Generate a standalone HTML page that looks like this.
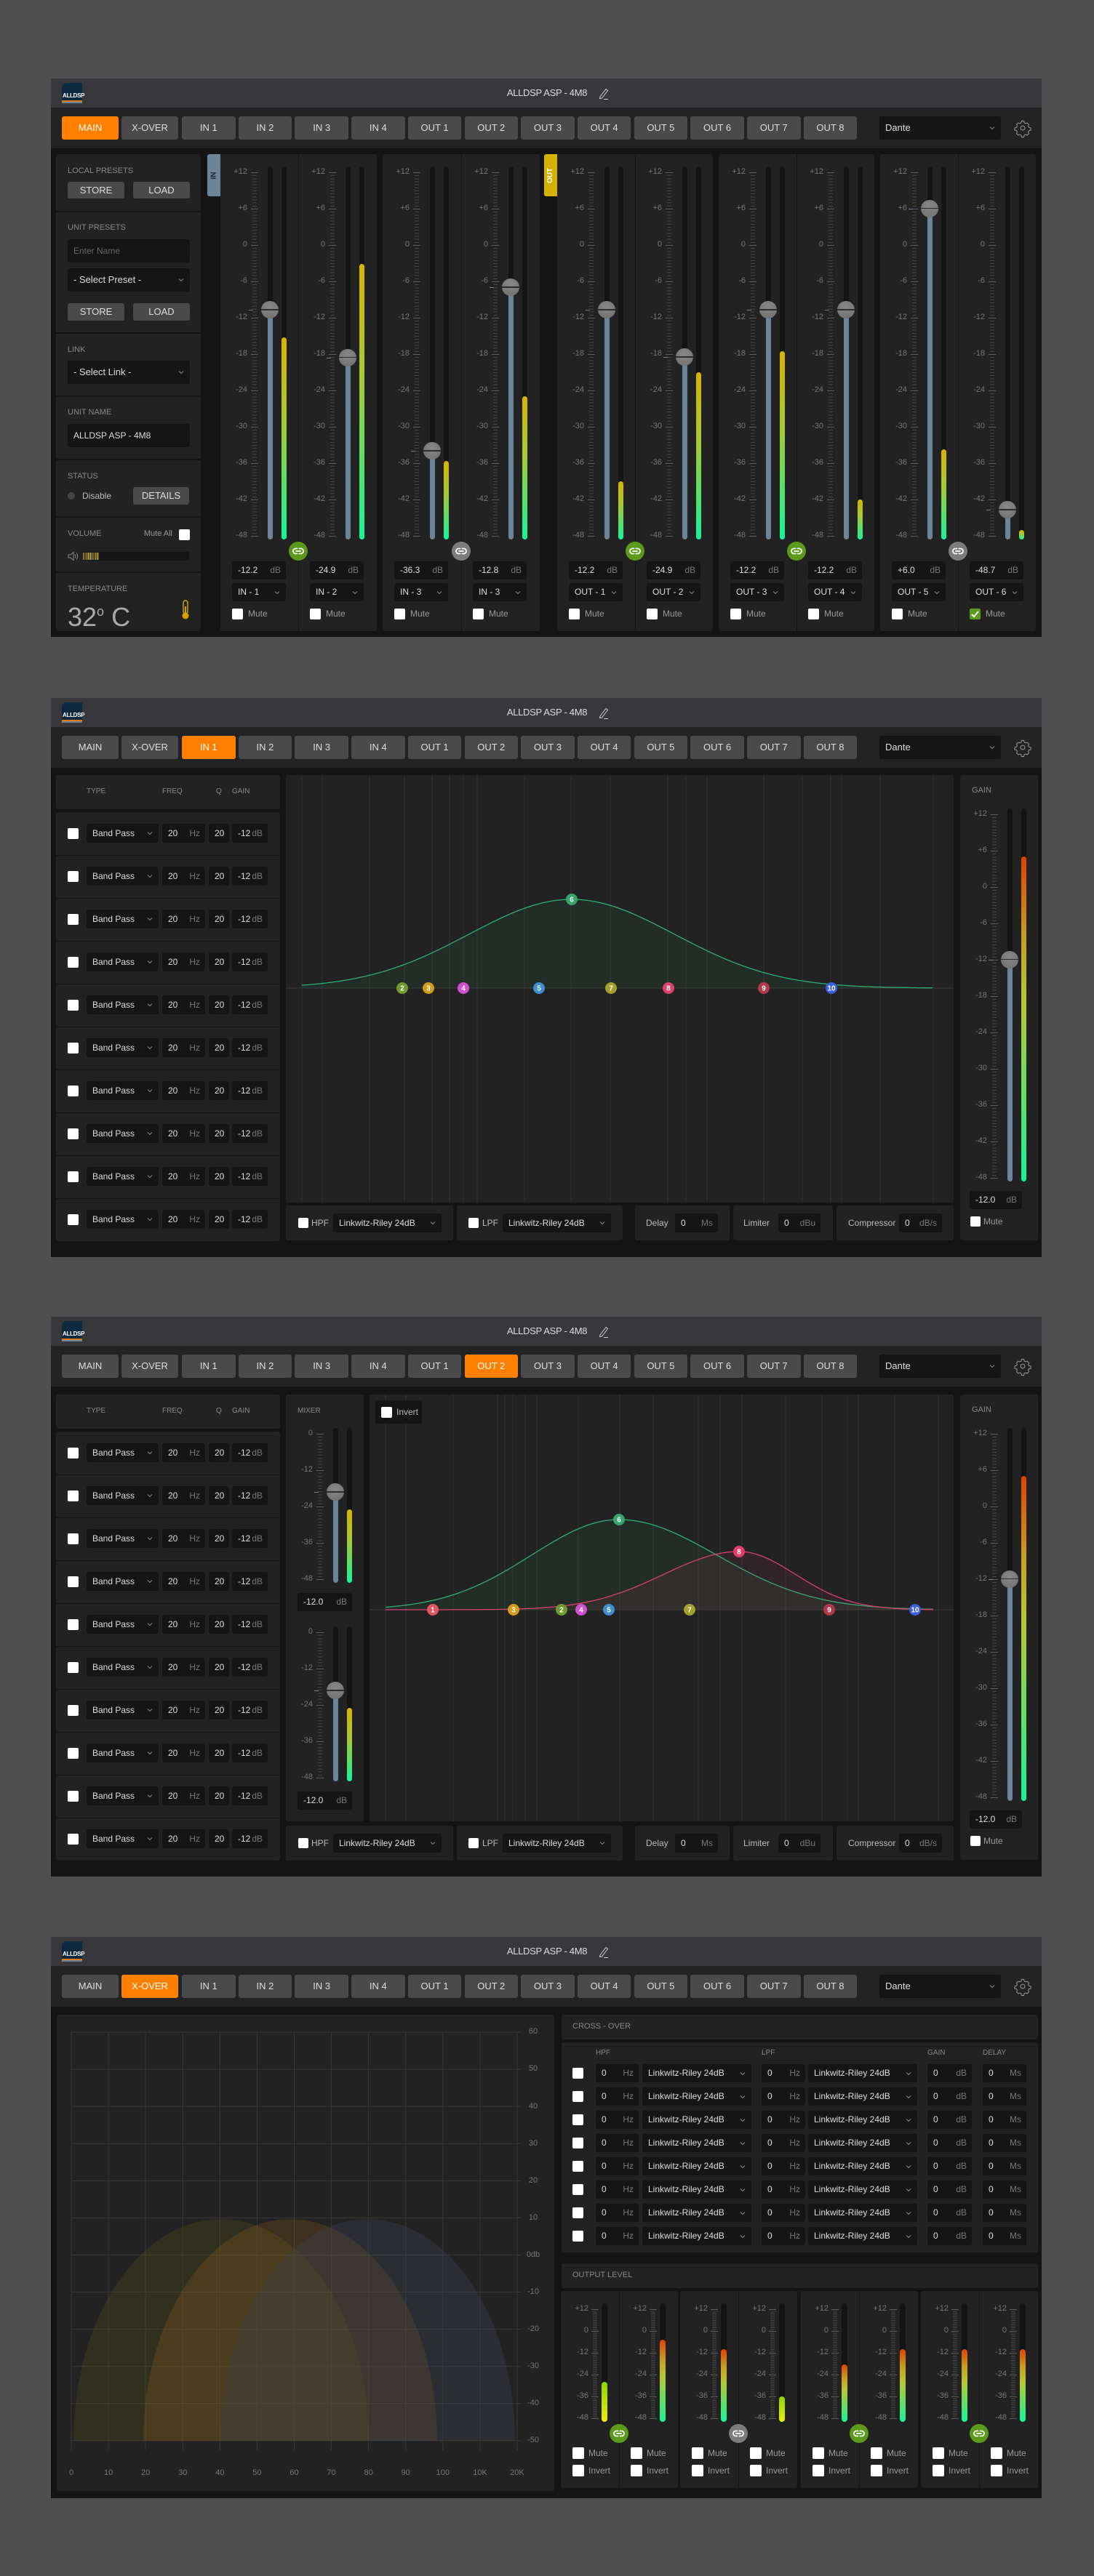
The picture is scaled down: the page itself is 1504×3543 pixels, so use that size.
<!DOCTYPE html>
<html><head><meta charset="utf-8"><title>ALLDSP ASP - 4M8</title>
<style>
html,body{margin:0;padding:0;}
body{width:1504px;height:3543px;background:#4f4f4f;position:relative;overflow:hidden;font-family:"Liberation Sans Narrow","Liberation Sans",sans-serif;}
#root{position:absolute;left:0;top:0;width:1504px;height:3543px;}
#root div{box-sizing:border-box;}
svg{overflow:visible}
</style></head>
<body><div id="root"></div>
<script>
let H='';
const A=(x,y,w,h,s,c='')=>{H+=`<div style="position:absolute;left:${x}px;top:${y}px;width:${w}px;height:${h}px;${s}">${c}</div>`;};
const T=(x,cy,t,fs=12,col='#ccc',ex='')=>{H+=`<div style="position:absolute;left:${x}px;top:${cy-fs*0.6}px;line-height:${fs*1.2}px;font-size:${fs}px;color:${col};white-space:nowrap;${ex}">${t}</div>`;};
const TR=(xr,cy,t,fs=12,col='#ccc')=>{H+=`<div style="position:absolute;left:${xr-120}px;width:120px;text-align:right;top:${cy-fs*0.6}px;line-height:${fs*1.2}px;font-size:${fs}px;color:${col};white-space:nowrap">${t}</div>`;};
const TC=(xc,cy,t,fs=12,col='#ccc',ex='')=>{H+=`<div style="position:absolute;left:${xc-100}px;width:200px;text-align:center;top:${cy-fs*0.6}px;line-height:${fs*1.2}px;font-size:${fs}px;color:${col};white-space:nowrap;${ex}">${t}</div>`;};
const chev=(x,cy)=>{H+=`<svg style="position:absolute;left:${x}px;top:${cy-2}px" width="8" height="5"><polyline points="1,0.5 4,3.5 7,0.5" fill="none" stroke="#888" stroke-width="1"/></svg>`;};
const inp=(x,y,w,h,v,u,vc='#ddd')=>{A(x,y,w,h,'background:#151515;border-radius:3px');T(x+8,y+h/2,v,12,vc);if(u)TR(x+w-7,y+h/2,u,12,'#777');};
const sel=(x,y,w,h,v,fs=12)=>{A(x,y,w,h,'background:#151515;border-radius:3px');T(x+8,y+h/2,v,fs,'#ddd');chev(x+w-16,y+h/2);};
const cb=(x,cy,s=15,ch=false)=>{A(x,cy-s/2,s,s,`background:${ch?'#5c9a1a':'#fff'};border-radius:2px`,ch?`<svg width="${s}" height="${s}"><polyline points="3,8 6,11 12,4" fill="none" stroke="#fff" stroke-width="2"/></svg>`:'');};
const btn=(x,y,w,h,t,bg='#4a4a4a',col='#ddd',fs=13)=>{A(x,y,w,h,`background:${bg};border-radius:3px;color:${col};font-size:${fs}px;text-align:center;line-height:${h}px`,t);};
const linkSvg='<svg width="26" height="26"><path d="M11.5 9.5H9.5a3.5 3.5 0 0 0 0 7h2M14.5 9.5h2a3.5 3.5 0 0 1 0 7h-2M10 13h6" fill="none" stroke="#fff" stroke-width="1.8" stroke-linecap="round"/></svg>';
const link=(cx,cy,g)=>{A(cx-13,cy-13,26,26,`background:${g?'#5c9a1a':'#7c7c7c'};border-radius:50%`,linkSvg);};
const GR={y:'linear-gradient(#d8b400,#a8c830 40%,#14f59a)',r:'linear-gradient(#e04000,#c8a020 25%,#b8c830 45%,#14f59a)',l:'linear-gradient(#8cd400,#f0ee00)'};
function strip(o){
 const {sx,y0,ppd,top,bot,labels,knob,meter,mt,step,lo=37,to=42,tro=68,mo=87,tw=7}=o;
 const Y=d=>y0+(top-d)*ppd, yt=Y(top), yb=Y(bot);
 A(sx+to+2,yt,6,yb-yt,`background:repeating-linear-gradient(#454545 0 1px,transparent 1px ${step}px)`);
 labels.forEach(d=>{TR(sx+lo,Y(d),(d>0?'+':'')+d,11,'#777');A(sx+to,Y(d),10,1,'background:#5e5e5e');});
 if(tro!=null)A(sx+tro-tw/2,yt-8,tw,yb-yt+13,'background:#141414;border-radius:4px');
 A(sx+mo-tw/2,yt-8,tw,yb-yt+13,'background:#141414;border-radius:4px');
 if(meter!=null){const my=Y(meter);A(sx+mo-tw/2,my,tw,yb+5-my,`background:${GR[mt]};border-radius:4px`);}
 if(knob!=null){const ky=Y(knob);A(sx+tro-tw/2,ky,tw,yb+5-ky,'background:#6b8499;border-radius:0 0 4px 4px');A(sx+to-3,ky,6,1,'background:#6b8499');
  A(sx+tro-12,ky-12,24,24,'background:radial-gradient(circle at 50% 35%,#888,#6e6e6e);border-radius:50%','<div style="position:absolute;left:0;top:11px;width:24px;height:1.5px;background:#2e2e2e"></div>');}
}
const TABS=['MAIN','X-OVER','IN 1','IN 2','IN 3','IN 4','OUT 1','OUT 2','OUT 3','OUT 4','OUT 5','OUT 6','OUT 7','OUT 8'];
function panel(top,bot,act){
 A(70,top,1362,bot-top,'background:#141414');
 A(70,top,1362,40,'background:#38383c');
 A(70,top+40,1362,56,'background:#232323');
 A(85,top+6,28,28,'background:#0d2a40;clip-path:polygon(4px 0,100% 0,100% 100%,0 100%,0 4px)');
 T(86,top+24,'ALLDSP',8,'#fff','font-weight:bold;letter-spacing:-0.3px');
 A(85,top+30,28,1.5,'background:#e07a10');A(85,top+31.5,28,2.5,'background:#6b8499');
 TC(752,top+20,'ALLDSP ASP - 4M8',13,'#ddd','letter-spacing:-0.3px');
 H+=`<svg style="position:absolute;left:822px;top:${top+12}px" width="16" height="17"><path d="M3 13 L11 2.5 L13.5 4.5 L5.5 15 L2.5 15.5 Z" fill="none" stroke="#ccc" stroke-width="1"/><path d="M8 16.5 H14" stroke="#ccc" stroke-width="1"/></svg>`;
 TABS.forEach((t,i)=>{let x,w;if(i==0){x=85;w=78}else if(i==1){x=167;w=78}else{x=250+(i-2)*77.7;w=73.5}
  btn(x,top+52,w,32,t,i==act?'#ff8000':'#4a4a4a',i==act?'#fff':'#ddd',13);});
 sel(1209,top+52,167,32,'Dante',13);
 H+=`<svg style="position:absolute;left:1395px;top:${top+57}px" width="22" height="22" viewBox="0 0 24 24"><path d="M10.3 1.5h3.4l.6 2.8 1.8 1 2.7-.9 2.4 2.4-.9 2.7 1 1.8 2.8.6v3.4l-2.8.6-1 1.8.9 2.7-2.4 2.4-2.7-.9-1.8 1-.6 2.8h-3.4l-.6-2.8-1.8-1-2.7.9-2.4-2.4.9-2.7-1-1.8-2.8-.6v-3.4l2.8-.6 1-1.8-.9-2.7 2.4-2.4 2.7.9 1.8-1z" fill="none" stroke="#999" stroke-width="1.1"/><circle cx="12" cy="12" r="3.2" fill="none" stroke="#999" stroke-width="1.1"/></svg>`;
}
/* ---------- PANEL 1 ---------- */
panel(108,876,0);
A(77,212,199,656,'background:#222;border-radius:3px');
[290,457,544,631,710,786].forEach(y=>A(77,y,199,2,'background:#151515'));
const lab=(x,cy,t)=>T(x,cy,t,11,'#888');
lab(93,236,'LOCAL PRESETS');btn(93,250,78,23,'STORE');btn(183,250,78,23,'LOAD');
lab(93,314,'UNIT PRESETS');inp(93,329,168,32,'Enter Name','', '#666');sel(93,369,168,32,'- Select Preset -',13);
btn(93,417,78,24,'STORE');btn(183,417,78,24,'LOAD');
lab(93,482,'LINK');sel(93,496,168,32,'- Select Link -',13);
lab(93,568,'UNIT NAME');inp(93,583,168,32,'ALLDSP ASP - 4M8','');
lab(93,656,'STATUS');A(93,677,10,10,'background:#444;border-radius:50%');T(113,682,'Disable',12,'#bbb');btn(183,670,77,24,'DETAILS');
lab(93,735,'VOLUME');TR(237,735,'Mute All',11,'#999');cb(246,735,15);
H+=`<svg style="position:absolute;left:93px;top:758px" width="16" height="14"><path d="M1 5h3l4-3.5v11L4 9H1z M10 4.5q2 2.5 0 5 M12 2.5q3.5 4.5 0 9" fill="none" stroke="#888" stroke-width="1"/></svg>`;
A(113,759,147,12,'background:#151515');A(114,760,22,10,'background:repeating-linear-gradient(90deg,#d8b400 0 1.2px,transparent 1.2px 2.4px)');
lab(93,811,'TEMPERATURE');
H+=`<div style="position:absolute;left:93px;top:821px;font-size:36px;line-height:40px;color:#aaa;white-space:nowrap">32<sup style="font-size:18px;vertical-align:14px">o</sup> C</div>`;
H+=`<svg style="position:absolute;left:248px;top:825px" width="14" height="28"><rect x="4" y="1" width="6" height="18" rx="3" fill="none" stroke="#d4a000" stroke-width="1.5"/><circle cx="7" cy="22" r="4.5" fill="#d4a000"/><rect x="6" y="9" width="2" height="12" fill="#d4a000"/></svg>`;
A(285,212,18,58,'background:#6b8499;border-radius:3px 0 0 3px','<div style="position:absolute;left:0;top:0;width:18px;height:58px;display:flex;align-items:center;justify-content:center"><span style="transform:rotate(-90deg);font-size:10px;font-weight:bold;color:#1d2630;font-family:Liberation Sans,sans-serif">IN</span></div>');
A(748,212,18,58,'background:#d4b000;border-radius:3px 0 0 3px','<div style="position:absolute;left:0;top:0;width:18px;height:58px;display:flex;align-items:center;justify-content:center"><span style="transform:rotate(-90deg);font-size:10px;font-weight:bold;color:#fff;font-family:Liberation Sans,sans-serif">OUT</span></div>');
const groups=[[303,410,518,1],[526,634,742,0],[766,873,980,1],[988,1095,1202,1],[1210,1317,1424,0]];
const S1=[['-12.2','IN - 1',-10.7,-15.2],['-24.9','IN - 2',-18.6,-3.1],['-36.3','IN - 3',-34,-35.6],['-12.8','IN - 3',-7,-25],
['-12.2','OUT - 1',-10.7,-39],['-24.9','OUT - 2',-18.5,-21],['-12.2','OUT - 3',-10.7,-17.5],['-12.2','OUT - 4',-10.7,-42],['+6.0','OUT - 5',6,-33.7],['-48.7','OUT - 6',-43.7,-47]];
const L12=[12,6,0,-6,-12,-18,-24,-30,-36,-42,-48];
groups.forEach((g,gi)=>{A(g[0],212,g[2]-g[0],656,'background:#222;border-radius:3px');A(g[1],212,1,656,'background:#151515');
 [g[0],g[1]].forEach((sx,k)=>{const d=S1[gi*2+k];
  strip({sx,y0:237,ppd:8.333,top:12,bot:-48,labels:L12,knob:d[2],meter:d[3],mt:'y',step:4.167});
  inp(sx+16,772,74,25,d[0],'dB');sel(sx+16,802,74,25,d[1]);cb(sx+16,844,15,gi*2+k==9);T(sx+38,844,'Mute',12,'#999');});
 link(g[1],758,g[3]);});
function eq(top){
 A(77,top,308,47,'background:#222;border-radius:3px');
 [[119,'TYPE'],[223,'FREQ'],[297,'Q'],[319,'GAIN']].forEach(a=>T(a[0],top+23,a[1],10,'#888'));
 A(77,top+51,308,590,'background:#222;border-radius:3px');
 for(let i=0;i<10;i++){const ry=top+51+i*59;if(i)A(77,ry,308,1,'background:#151515');const cy=ry+29;
  cb(93,cy);sel(119,cy-13,99,26,'Band Pass');inp(223,cy-13,59,26,'20','Hz');inp(287,cy-13,28,26,'20','');inp(319,cy-13,49,26,'-12','dB');}
}
function bottomCards(y){
 const c=y+24;
 [[393,230],[628,228],[873,130],[1008,137],[1150,161]].forEach(a=>A(a[0],y,a[1],48,'background:#222;border-radius:3px'));
 cb(410,c,14);T(428,c,'HPF',12,'#bbb');sel(458,c-13,149,26,'Linkwitz-Riley 24dB');
 cb(644,c,14);T(663,c,'LPF',12,'#bbb');sel(691,c-13,149,26,'Linkwitz-Riley 24dB');
 T(888,c,'Delay',12,'#bbb');inp(928,c-13,59,26,'0','Ms');
 T(1022,c,'Limiter',12,'#bbb');inp(1070,c-13,58,26,'0','dBu');
 T(1166,c,'Compressor',12,'#bbb');inp(1236,c-13,59,26,'0','dB/s');
}
function gainCard(top){
 A(1320,top,107,640,'background:#222;border-radius:3px');
 T(1336,top+22,'GAIN',11,'#888');
 strip({sx:1320,y0:top+54,ppd:8.333,top:12,bot:-48,labels:L12,knob:-12,meter:5,mt:'r',step:4.167});
 inp(1333,top+572,72,25,'-12.0','dB');cb(1334,top+614,14);T(1352,top+614,'Mute',12,'#999');
}
function gpath(x0,x1,px,base,h,wl,wr){let p='';for(let x=x0;x<=x1;x+=3){const w=x<px?wl:wr;const y=base-h*Math.exp(-Math.pow((x-px)/w,2));p+=(p?'L':'M')+x.toFixed(1)+','+y.toFixed(1);}return p;}
function graph(x,y,w,h,lines,base,curves,nodes){
 let s=`<svg style="position:absolute;left:0;top:0" width="1504" height="3543">`;
 lines.forEach(lx=>s+=`<line x1="${lx}" y1="${y}" x2="${lx}" y2="${y+h}" stroke="#333" stroke-width="1"/>`);
 s+=`<line x1="${x}" y1="${base}" x2="${x+w}" y2="${base}" stroke="#3a3a3a" stroke-width="1"/>`;
 curves.forEach(c=>{const p=gpath(...c.a);s+=`<path d="${p}L${c.a[1]},${base}L${c.a[0]},${base}Z" fill="${c.col}" fill-opacity="0.08"/><path d="${p}" fill="none" stroke="${c.col}" stroke-width="1.3"/>`;});
 nodes.forEach(n=>{const ny=n[3]||base;s+=`<circle cx="${n[1]}" cy="${ny}" r="8" fill="${n[2]}"/><text x="${n[1]}" y="${ny+3.5}" font-size="10" font-weight="bold" fill="#fff" text-anchor="middle" font-family="Liberation Sans,sans-serif">${n[0]}</text>`;});
 s+='</svg>';
 A(x,y,w,h,'background:#222;border-radius:3px');H+=s;
}
panel(960,1729,2);
eq(1066);
graph(393,1066,918,588,[415,443,508,556,594,618,637,656,721,785,839,918,943,972,1050,1103,1142,1157,1210,1283],1359,
 [{a:[415,1283,786,1359,122,200,200],col:'#2fae70'}],
 [[2,553,'#6f9a2e'],[3,589,'#d49a1a'],[4,637,'#d050d0'],[5,741,'#3f8fd0'],[6,786,'#36a56e',1237],[7,840,'#a0a02a'],[8,919,'#e0406a'],[9,1050,'#b03a4a'],[10,1143,'#3a5fd8']]);
bottomCards(1658);
gainCard(1066);
panel(1811,2581,7);
eq(1918);
A(393,1918,107,587,'background:#222;border-radius:3px');
T(409,1941,'MIXER',10,'#888');
[[1972,2191],[2245,2464]].forEach(m=>{strip({sx:393,y0:m[0],ppd:4.1667,top:0,bot:-48,labels:[0,-12,-24,-36,-48],knob:-19.2,meter:-25,mt:'y',step:4.167});inp(409,m[1],75,25,'-12.0','dB');});
graph(508,1918,803,587,[530,558,623,684,694,705,722,738,795,852,898,960,990,1020,1080,1130,1165,1180,1230,1290],2214,
 [{a:[530,1283,851,2214,124,170,190],col:'#2fae70'},{a:[530,1283,1016,2214,80,147,110],col:'#d8406e'}],
 [[1,595,'#e05560'],[3,706,'#d49a1a'],[2,772,'#6f9a2e'],[4,799,'#d050d0'],[5,837,'#3f8fd0'],[6,851,'#36a56e',2090],[7,948,'#a0a02a'],[8,1016,'#e0406a',2134],[9,1140,'#b03a4a'],[10,1258,'#3a5fd8']]);
A(516,1926,64,32,'background:#151515;border-radius:3px');cb(524,1942,15);T(545,1942,'Invert',12,'#bbb');
bottomCards(2511);
gainCard(1918);
panel(2664,3436,1);
A(78,2771,684,655,'background:#222;border-radius:3px');
{let s=`<svg style="position:absolute;left:0;top:0" width="1504" height="3543">`;
 for(let i=0;i<=12;i++){const x=98+i*51.08;s+=`<line x1="${x}" y1="2795" x2="${x}" y2="3370" stroke="#383838"/>`;}
 for(let j=0;j<=11;j++){const y=2795+j*51.08;s+=`<line x1="98" y1="${y}" x2="716" y2="${y}" stroke="#383838"/>`;}
 s+=`<path d="M101,3357 A203,305 0 0 1 507,3357 Z" fill="rgb(95,90,25)" fill-opacity="0.25"/>`;
 s+=`<path d="M197,3357 A202,305 0 0 1 601,3357 Z" fill="rgb(150,95,25)" fill-opacity="0.25"/>`;
 s+=`<path d="M303,3357 A202.5,305 0 0 1 708,3357 Z" fill="rgb(60,66,82)" fill-opacity="0.35"/>`;
 s+='</svg>';H+=s;}
['0','10','20','30','40','50','60','70','80','90','100','10K','20K'].forEach((t,i)=>TC(98+i*51.08,3402,t,11,'#777'));
['60','50','40','30','20','10','0db','-10','-20','-30','-40','-50'].forEach((t,j)=>TC(733,2795+j*51.08,t,11,'#777'));
A(772,2771,655,34,'background:#222;border-radius:3px');T(787,2788,'CROSS - OVER',11,'#888');
A(772,2809,655,289,'background:#222;border-radius:3px');
[[819,'HPF'],[1047,'LPF'],[1275,'GAIN'],[1351,'DELAY']].forEach(a=>T(a[0],2824,a[1],10,'#888'));
for(let i=0;i<8;i++){const y=2839+i*32,c=y+12.5;cb(787,c,15);inp(819,y,59,25,'0','Hz');sel(883,y,150,25,'Linkwitz-Riley 24dB');
 inp(1047,y,60,25,'0','Hz');sel(1111,y,150,25,'Linkwitz-Riley 24dB');inp(1275,y,61,25,'0','dB');inp(1351,y,60,25,'0','Ms');}
A(772,3113,655,34,'background:#222;border-radius:3px');T(787,3130,'OUTPUT LEVEL',11,'#888');
const OG=[[771,1],[935,0],[1101,1],[1266,1]];const OV=[[-28,'l'],[-4.8,'r'],[-9.9,'r'],[-36,'l'],[-18.4,'r'],[-10,'r'],[-10,'r'],[-10,'r']];
OG.forEach((g,gi)=>{const gx=g[0];A(gx,3151,161,271,'background:#222;border-radius:3px');A(gx+80,3151,1,271,'background:#151515');
 [gx,gx+80].forEach((sx,k)=>{const v=OV[gi*2+k];strip({sx,y0:3176,ppd:2.5,top:12,bot:-48,labels:[12,0,-12,-24,-36,-48],knob:null,meter:v[0],mt:v[1],step:2.5,lo:38,to:42,tro:null,mo:60,tw:8});
  cb(sx+16,3374,16);T(sx+38,3374,'Mute',12,'#999');cb(sx+16,3398,16);T(sx+38,3398,'Invert',12,'#999');});
 link(gx+80,3347,g[1]);});
document.getElementById('root').innerHTML=H;
</script>
</body></html>
